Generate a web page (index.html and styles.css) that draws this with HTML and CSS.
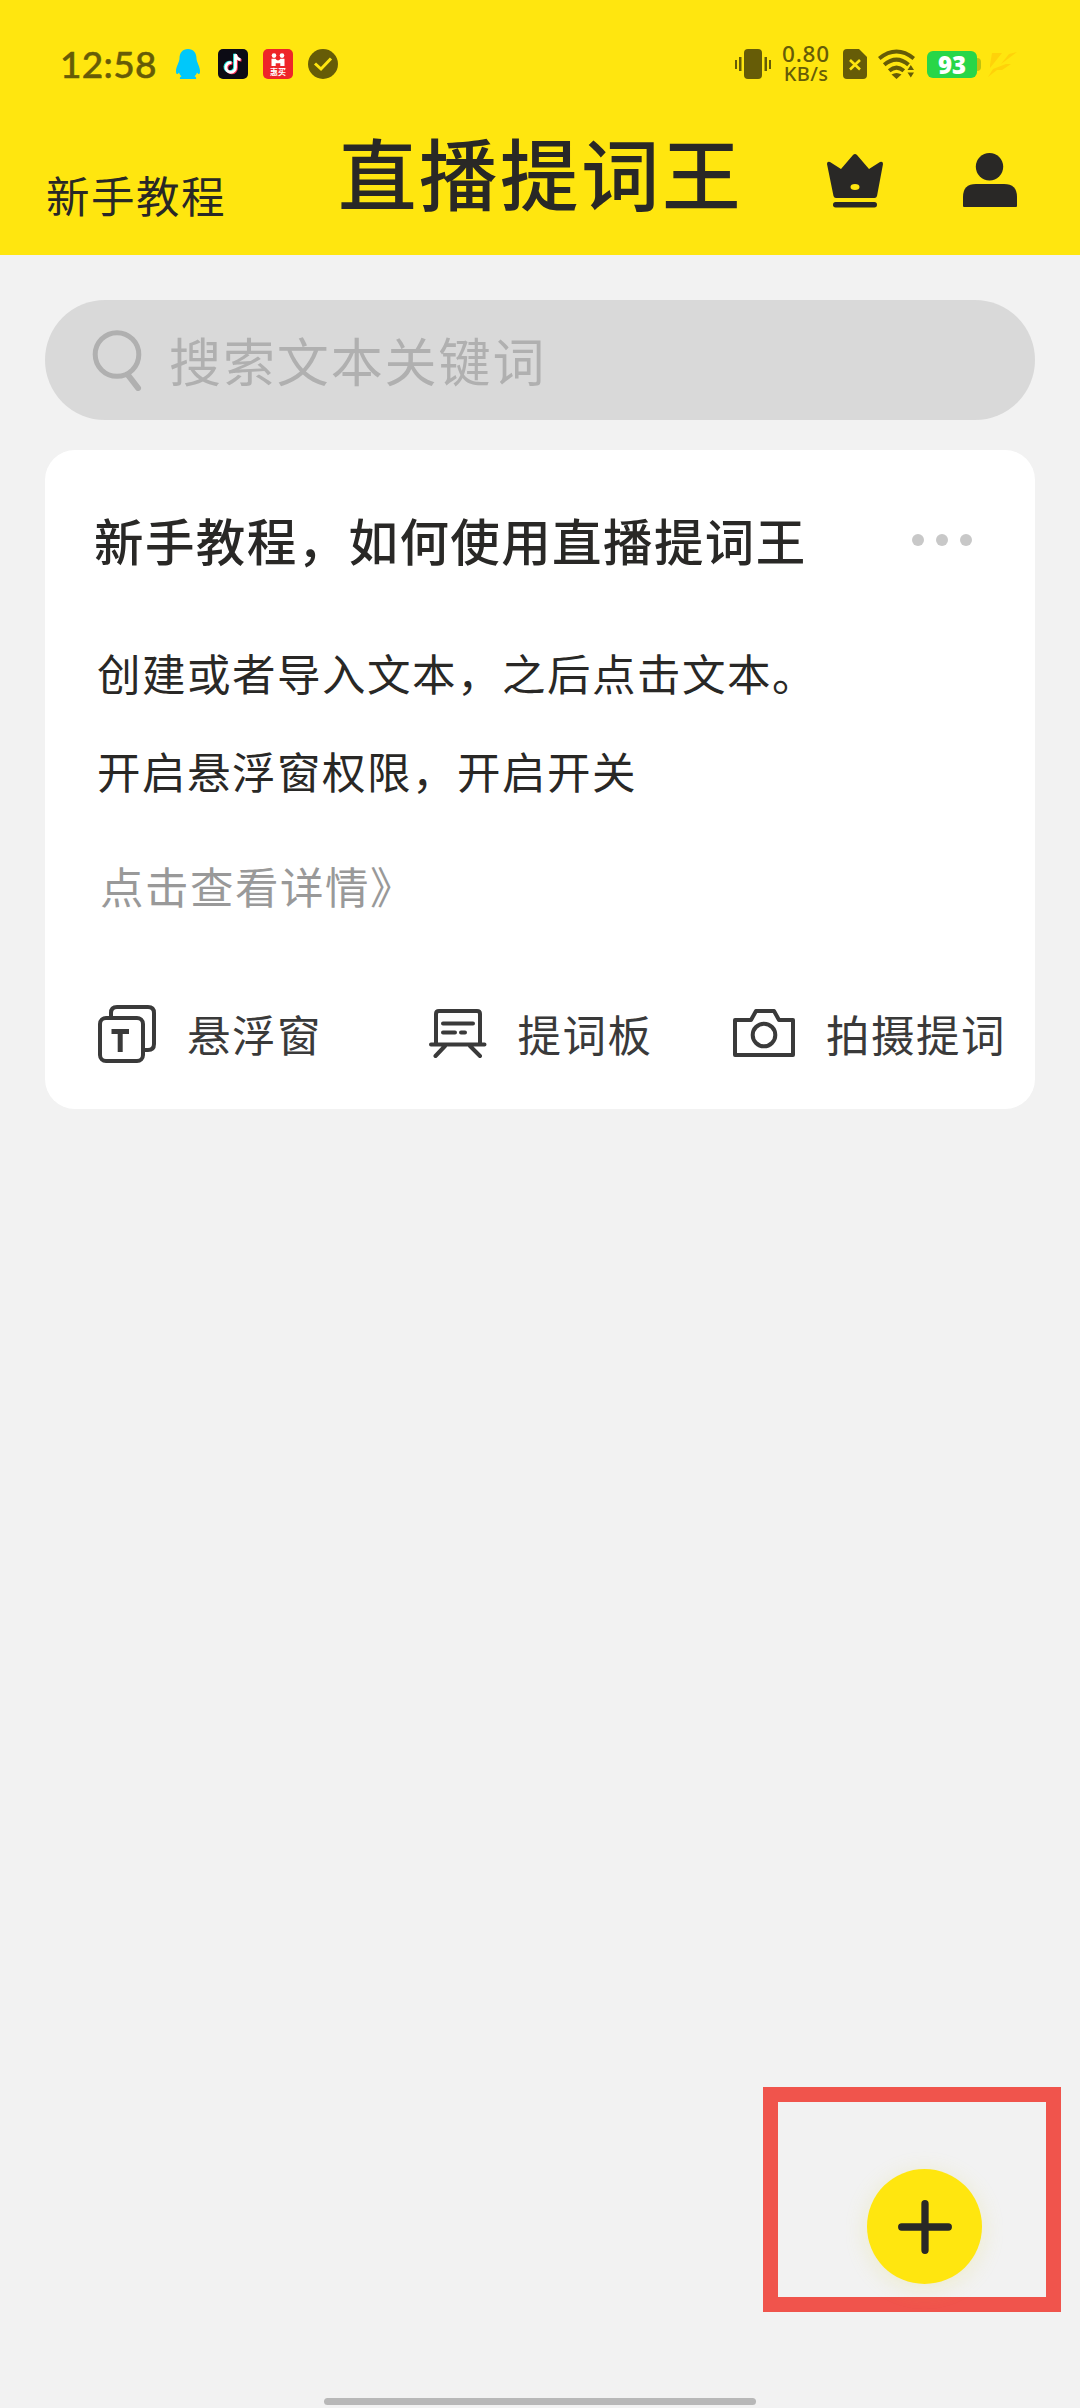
FILE: index.html
```html
<!DOCTYPE html>
<html lang="zh-CN">
<head>
<meta charset="utf-8">
<title>直播提词王</title>
<link rel="stylesheet" href="styles.css">
</head>
<body>
<div class="screen">
  <header class="top">
    <div class="status">
      <div class="status-left">
        <span class="clock">12:58</span>
        <svg class="qq" width="26" height="30" viewBox="0 0 26 30"><path fill="#00c8fa" d="M13 0C7.500 0 4.500 4 4.500 9.500C4.500 13 1 17.500 1 22C1 24 1.300 25 2 25C2.800 25 3.600 24 4 23.400C4.500 25 5.400 26.300 6.500 27.200C5 27.800 4.500 28.700 5 30H21C21.500 28.700 21 27.800 19.500 27.200C20.600 26.300 21.500 25 22 23.400C22.400 24 23.200 25 24 25C24.700 25 25 24 25 22C25 17.500 21.500 13 21.500 9.500C21.500 4 18.500 0 13 0Z"/></svg>
        <svg class="tile" width="30" height="30" viewBox="0 0 30 30"><rect width="30" height="30" rx="5" fill="#0c0b14"/><g fill="none" stroke-width="2.800"><path stroke="#25e8e4" d="M13.500 13.700a4.800 4.800 0 1 0 4 4.500V5.200M17.500 5.200c.3 3.500 2 5 5 5.400" transform="translate(-1 -.5)"/><path stroke="#fb2c55" d="M13.500 13.700a4.800 4.800 0 1 0 4 4.500V5.200M17.500 5.200c.3 3.500 2 5 5 5.400" transform="translate(1 .7)"/><path stroke="#fff" d="M13.500 13.700a4.800 4.800 0 1 0 4 4.500V5.200M17.500 5.200c.3 3.500 2 5 5 5.400"/></g></svg>
        <span class="shop"><svg width="16" height="14" viewBox="0 0 16 14"><g fill="#fff"><circle cx="4" cy="2.600" r="2.300"/><circle cx="12" cy="2.600" r="2.300"/><path d="M1.500 5.800H5.500Q6.500 7.500 8 7.500T10.500 5.800H14.500V13H10.300V10.300H5.700V13H1.500Z"/></g></svg><b>惠买</b></span>
        <svg class="tile" width="30" height="30" viewBox="0 0 30 30"><circle cx="15" cy="15" r="15" fill="#665c07"/><path d="M7 14.500L13 20L23 9.500" fill="none" stroke="#ffe60f" stroke-width="3"/></svg>
      </div>
      <div class="status-right">
        <svg width="36" height="30" viewBox="0 0 36 30" fill="#665c07"><rect x="9" width="18" height="30" rx="4"/><path d="M0 11h2v9H0zM4 8h2.500v14H4zM29.500 8H32v14h-2.500zM34 11h2v9h-2z"/></svg>
        <div class="speed"><span class="rate">0.80</span><span class="unit">KB/s</span></div>
        <svg class="sim" width="24" height="30" viewBox="0 0 24 30"><path fill="#665c07" d="M4 0H16L24 8V26a4 4 0 0 1-4 4H4a4 4 0 0 1-4-4V4a4 4 0 0 1 4-4Z"/><path d="M7 11L17 20.500M17 11L7 20.500" stroke="#ffe60f" stroke-width="2.600"/></svg>
        <svg class="wifi" width="37" height="30" viewBox="0 0 37 30"><g fill="none" stroke="#665c07" stroke-width="4"><path d="M1.200 9.500Q18.500 -4.500 35.800 9.500"/><path d="M6.200 15.800Q18.500 5.500 30.500 15.800"/><path d="M11.200 21.800Q18.500 15.500 25.800 21.800"/></g><path fill="#665c07" d="M13.500 25.500Q18.500 22.500 23.500 25.500L18.500 30ZM29.500 21l3.300-5 3.200 5ZM29.500 23.500h6.500l-3.200 5Z"/></svg>
        <div class="battery"><span>93</span><i></i></div>
        <svg class="bolt" width="30" height="25" viewBox="0 0 30 25" fill="#ffd20a"><path d="M4 1H14L2 16V13ZM29 0L13 12L21 2ZM5 17L18 12H23L14 18H9L0 25Z"/></svg>
      </div>
    </div>
    <div class="nav">
      <span class="guide">新手教程</span>
      <h1>直播提词王</h1>
      <svg class="crown" width="58" height="56" viewBox="0 0 58 56"><g fill="#292826"><path fill-rule="evenodd" d="M1 11Q1 8 4 9L15 16L27 2Q29 0 31 2L43 16L54 9Q57 8 57 11L51 43Q50.500 45 48.500 45H10Q8 45 7.500 43ZM29 31C26 31 24.500 32.200 24.500 34S26 37 29 37S33.500 35.800 33.500 34S32 31 29 31Z"/><rect x="7" y="49" width="44" height="5.500" rx="2.700"/></g></svg>
      <svg class="person" width="54" height="54" viewBox="0 0 54 54" fill="#292826"><circle cx="26.500" cy="13.700" r="13.700"/><path d="M0 53V44Q0 31 13 31H41Q54 31 54 44V53Q54 54 53 54H1Q0 54 0 53Z"/></svg>
    </div>
  </header>
  <main>
    <div class="search">
      <svg width="52" height="62" viewBox="0 0 52 62" fill="none" stroke="#b0b0b0" stroke-width="5"><circle cx="26" cy="25.500" r="21.800"/><path d="M37 46L47 59" stroke-width="6" stroke-linecap="round"/></svg>
      <span>搜索文本关键词</span>
    </div>
    <section class="card">
      <div class="card-head">
        <h2>新手教程，如何使用直播提词王</h2>
        <div class="dots"><i></i><i></i><i></i></div>
      </div>
      <p>创建或者导入文本，之后点击文本。</p>
      <p>开启悬浮窗权限，开启开关</p>
      <a class="more">点击查看详情》</a>
      <div class="actions">
        <div class="action"><svg width="58" height="58" viewBox="0 0 58 58" fill="none" stroke="#3a3a3a" stroke-width="4"><rect x="2" y="13" width="43" height="43" rx="6"/><path d="M13 12V8Q13 2 19 2H50Q56 2 56 8V39Q56 45 50 45H46"/><path d="M13.500 26.500H31M22.200 26V47" stroke-width="5"/></svg><span>悬浮窗</span></div>
        <div class="action board"><svg width="58" height="50" viewBox="0 0 58 50" fill="none" stroke="#3a3a3a" stroke-width="4" stroke-linecap="round"><path d="M7 34V5Q7 2 10 2H48Q51 2 51 5V34M2 35.500H55.500M16 37L6.500 47M41 37L51 47M14 14.500H44M14 23.500H26M32 23.500H36"/></svg><span>提词板</span></div>
        <div class="action"><svg width="62" height="50" viewBox="0 0 62 50" fill="none" stroke="#3a3a3a" stroke-width="4" stroke-linejoin="round"><path d="M2 11H18L23 2H41L46 11H60V46H2Z"/><circle cx="31" cy="26" r="11.300"/></svg><span>拍摄提词</span></div>
      </div>
    </section>
  </main>
  <div class="highlight">
    <div class="fab"><svg width="54" height="54" viewBox="0 0 54 54" stroke="#292826" stroke-width="7.300" stroke-linecap="round"><path d="M3.700 27H50.300M27 3.700V50.300"/></svg></div>
  </div>
  <div class="home-bar"></div>
</div>
</body>
</html>
```
FILE: styles.css
```css
* { box-sizing: border-box; }
body { margin: 0; background: #f2f2f2; color: #292826; font-family: "Noto Sans CJK SC", sans-serif; }
h1, h2, p { margin: 0; }
svg { display: block; flex: none; }
.screen { position: relative; width: 1080px; height: 2408px; overflow: hidden; display: flex; flex-direction: column; }
.top { height: 255px; background: #ffe60f; }
.status { display: flex; justify-content: space-between; height: 128px; padding: 0 62px 0 60px; align-items: center; color: #665c07; }
.status-left, .status-right { display: flex; align-items: center; }
.clock { width: 115px; font: 500 37px/40px Lato, sans-serif; letter-spacing: .3px; white-space: nowrap; -webkit-text-stroke: .5px #665c07; }
.tile { margin-left: 15px; }
.qq + .tile { margin-left: 17px; }
.shop { display: flex; flex-direction: column; align-items: center; width: 30px; height: 30px; margin-left: 15px; padding-top: 4px; border-radius: 5px; background: #ee2529; color: #fff; }
.shop b { font-size: 8px; line-height: 9px; }
.speed { display: flex; flex-direction: column; align-items: center; gap: 2px; width: 50px; margin-left: 10px; font: 500 20px/18px "Noto Sans", sans-serif; }
.speed .rate { font-size: 22.500px; letter-spacing: .8px; }
.speed .unit { font-size: 20px; letter-spacing: .3px; }
.sim { margin-left: 12px; }
.wifi { margin-left: 11px; }
.battery { display: flex; align-items: center; margin-left: 12px; }
.battery span { width: 50px; height: 27px; border-radius: 6px; background: #28d648; color: #fff; font: 800 24px/28px "Open Sans", sans-serif; text-align: center; }
.battery i { width: 4px; height: 13px; border-radius: 0 4px 4px 0; background: #bfc20f; }
.bolt { margin-left: 7px; }
.nav { display: flex; height: 127px; }
.guide { margin: 37px 0 0 46px; width: 292px; font-size: 43.500px; line-height: 60px; letter-spacing: 1.500px; }
h1 { width: 489px; font-size: 78.500px; line-height: 86px; font-weight: 500; letter-spacing: 2.500px; white-space: nowrap; }
.crown { margin: 25px 0 0 -1px; }
.person { margin: 25px 0 0 79px; }
main { padding: 45px 45px 0; display: flex; flex-direction: column; gap: 30px; }
.search { display: flex; align-items: center; gap: 26px; height: 120px; padding-left: 46px; border-radius: 60px; background: #d9d9d9; color: #b0b0b0; font-size: 52px; line-height: 70px; letter-spacing: 1.900px; }
.card { height: 659px; padding: 52px 29px 0 52px; border-radius: 30px; background: #fff; }
.card-head { display: flex; justify-content: space-between; align-items: center; height: 76px; padding-right: 34px; }
h2 { font-size: 49.500px; line-height: 76px; font-weight: 500; letter-spacing: 1.400px; margin-left: -3px; white-space: nowrap; }
.dots { display: flex; gap: 12px; }
.dots i { width: 12px; height: 12px; border-radius: 50%; background: #c8c8c8; }
p { margin-top: 63px; font-size: 43.500px; line-height: 64px; letter-spacing: 1.500px; }
p + p { margin-top: 34px; }
.more { display: block; margin: 51px 0 0 3px; color: #999; font-size: 43.500px; line-height: 64px; letter-spacing: 1.500px; }
.actions { display: flex; align-items: center; justify-content: space-between; margin-top: 84px; height: 64px; padding-left: 1px; color: #3a3a3a; white-space: nowrap; }
.action { display: flex; align-items: center; gap: 31px; font-size: 43.500px; line-height: 64px; letter-spacing: 1.500px; }
.board { margin-left: 26px; }
.highlight { position: absolute; left: 763px; top: 2087px; width: 298px; height: 225px; padding: 67px 0 0 89px; border: 15px solid #f0544c; }
.fab { display: flex; align-items: center; justify-content: center; width: 115px; height: 115px; border-radius: 50%; background: #ffe60f; box-shadow: 0 4px 22px rgba(225, 215, 70, .22); }
.home-bar { width: 432px; height: 7px; margin: auto auto 3px; border-radius: 4px; background: #b8b8b8; }
```
